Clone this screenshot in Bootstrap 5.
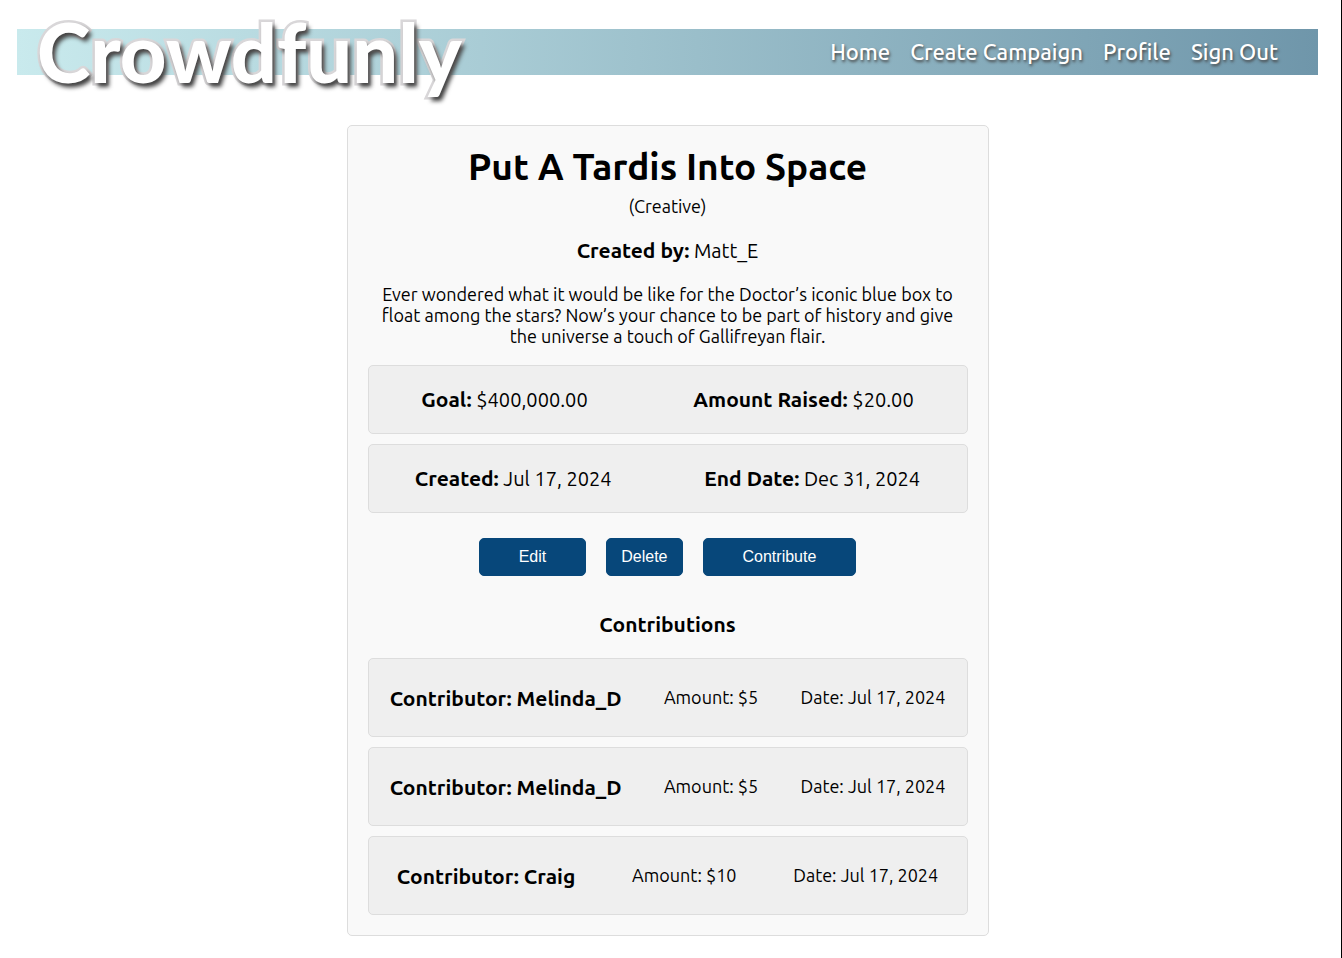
<!DOCTYPE html>
<html lang="en">
<head>
<meta charset="utf-8">
<meta name="viewport" content="width=device-width, initial-scale=1">
<title>Crowdfunly</title>
<link href="https://cdn.jsdelivr.net/npm/bootstrap@5.3.0/dist/css/bootstrap.min.css" rel="stylesheet">
<style>
  body {
    font: 18px/21px Ubuntu, "Noto Sans", sans-serif;
    color: #000;
    background: #fff;
    border-right: 1px solid #000;
    min-height: 100vh;
  }
  .page { padding: 29px 23px 21px 17px; }
  .site-bar {
    background: linear-gradient(to right, #c9eaed, #6f96aa);
    min-height: 46px;
    padding: 0 40px 0 20px;
    margin-bottom: 50px;
  }
  .wordmark {
    font: 900 81px/46px Lato, sans-serif;
    color: #fff;
    -webkit-text-stroke: 5px #d9d7d9;
    paint-order: stroke fill;
    text-shadow: 3px 4px 4px #444;
    text-decoration: none;
  }
  .site-bar .menu-link {
    color: #fff;
    font-size: 22px;
    font-weight: 500;
    line-height: 46px;
    text-decoration: none;
    text-shadow: 1px 2px 3px #444;
  }
  .menu-gap { gap: 20px; }
  .campaign {
    max-width: 642px;
    padding: 20px;
    background: #f9f9f9;
    border: 1px solid #ddd;
    border-radius: 5px;
  }
  .campaign h1 { font-size: 37px; line-height: 42px; font-weight: 700; margin: 0 0 8px; }
  .campaign p { margin: 0 0 18px; }
  .campaign .byline { margin: 20px 0; }
  .label-line { font-size: 20px; line-height: 26px; }
  .label-line b, .campaign h2, .campaign h3 { font-size: 21px; line-height: 26px; font-weight: 600; margin: 0; }
  .panel {
    background: #efefef;
    border: 1px solid #ddd;
    border-radius: 5px;
    margin-bottom: 10px;
    min-height: 69px;
  }
  .gift { min-height: 79px; }
  .gift:last-child { margin-bottom: 0; }
  .action-row { gap: 20px; margin: 25px 0 35px; }
  .action {
    --bs-btn-color: #fff;
    --bs-btn-bg: #07477a;
    --bs-btn-border-color: #07477a;
    --bs-btn-hover-color: #fff;
    --bs-btn-hover-bg: #05375f;
    --bs-btn-border-radius: 5px;
    --bs-btn-padding-x: 14px;
    --bs-btn-font-family: "Liberation Sans", Arial, sans-serif;
    --bs-btn-font-size: 16px;
    height: 38px;
    line-height: 20px;
  }
  .action-wide { --bs-btn-padding-x: 39px; }
  .campaign .contributions-title { margin-bottom: 21px; text-align: center; }
</style>
</head>
<body>
<div class="page">
  <nav class="site-bar d-flex flex-wrap align-items-center justify-content-between">
    <a class="wordmark" href="#">Crowdfunly</a>
    <div class="d-flex flex-wrap menu-gap">
      <a class="menu-link" href="#">Home</a>
      <a class="menu-link" href="#">Create Campaign</a>
      <a class="menu-link" href="#">Profile</a>
      <a class="menu-link" href="#">Sign Out</a>
    </div>
  </nav>

  <main class="campaign mx-auto">
    <header class="text-center">
      <h1>Put A Tardis Into Space</h1>
      <p>(Creative)</p>
      <p class="label-line byline"><b>Created by:</b> Matt_E</p>
      <p>Ever wondered what it would be like for the Doctor’s iconic blue box to float among the stars? Now’s your chance to be part of history and give the universe a touch of Gallifreyan flair.</p>
    </header>

    <div class="panel label-line d-flex flex-wrap align-items-center justify-content-around">
      <div><b>Goal:</b> $400,000.00</div>
      <div><b>Amount Raised:</b> $20.00</div>
    </div>
    <div class="panel label-line d-flex flex-wrap align-items-center justify-content-around">
      <div><b>Created:</b> Jul 17, 2024</div>
      <div><b>End Date:</b> Dec 31, 2024</div>
    </div>

    <div class="action-row d-flex flex-wrap justify-content-center">
      <button type="button" class="btn action action-wide">Edit</button>
      <button type="button" class="btn action">Delete</button>
      <button type="button" class="btn action action-wide">Contribute</button>
    </div>

    <h2 class="contributions-title">Contributions</h2>
    <section>
      <article class="panel gift d-flex flex-wrap align-items-center justify-content-around">
        <h3>Contributor: Melinda_D</h3>
        <span>Amount: $5</span>
        <span>Date: Jul 17, 2024</span>
      </article>
      <article class="panel gift d-flex flex-wrap align-items-center justify-content-around">
        <h3>Contributor: Melinda_D</h3>
        <span>Amount: $5</span>
        <span>Date: Jul 17, 2024</span>
      </article>
      <article class="panel gift d-flex flex-wrap align-items-center justify-content-around">
        <h3>Contributor: Craig</h3>
        <span>Amount: $10</span>
        <span>Date: Jul 17, 2024</span>
      </article>
    </section>
  </main>
</div>
<script src="https://cdn.jsdelivr.net/npm/bootstrap@5.3.0/dist/js/bootstrap.bundle.min.js"></script>
</body>
</html>
